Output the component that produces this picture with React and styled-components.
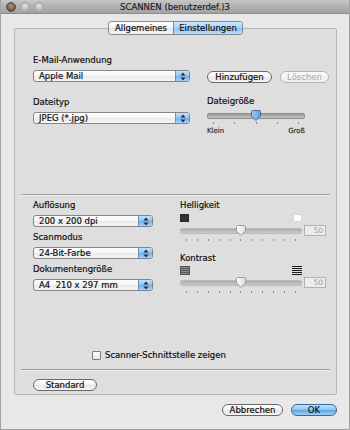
import React from 'react';
import styled, { createGlobalStyle } from 'styled-components';

const GlobalStyle = createGlobalStyle`
  html, body { margin: 0; padding: 0; background: #e8e8e8; }
  body { font-family: "DejaVu Sans", "Liberation Sans", sans-serif; font-size: 8.5px; color: #111; }
  * { box-sizing: border-box; }
`;

const Window = styled.div`
  width: 350px;
  height: 430px;
  display: flex;
  flex-direction: column;
  background: #e8e8e8;
  border: 1px solid #a2a2a2;
  border-top: none;
`;

const TitleBar = styled.div`
  height: 14px;
  flex: none;
  display: flex;
  align-items: center;
  position: relative;
  padding-left: 5px;
  gap: 4px;
  background: linear-gradient(#c6c6c6, #b2b2b2 50%, #a3a3a3);
  border-bottom: 1px solid #8c8c8c;
`;

const Light = styled.span`
  width: 10px;
  height: 10px;
  border-radius: 50%;
  background: ${p => (p.$active ? 'radial-gradient(circle at 50% 40%, #b09a84, #6c5644 70%)' : 'radial-gradient(circle at 50% 35%, #e2e2e2, #b4b4b4 75%)')};
  border: 1px solid ${p => (p.$active ? '#5a4838' : '#a0a0a0')};
`;

const Title = styled.div`
  position: absolute;
  left: 0;
  right: 0;
  text-align: center;
  font-size: 8.5px;
  color: #1a1a1a;
  -webkit-text-stroke: 0.15px #1a1a1a;
  pointer-events: none;
`;

const Body = styled.div`
  flex: 1;
  display: flex;
  flex-direction: column;
  padding: 0 12px 0 13px;
`;

const TabBox = styled.div`
  margin-top: 14px;
  height: 367px;
  display: flex;
  flex-direction: column;
  background: #dedede;
  border: 1px solid #b6b6b6;
  border-radius: 2px;
  padding: 0 6px;
`;

const Tabs = styled.div`
  align-self: center;
  margin-top: -8px;
  display: flex;
  height: 14px;
  border: 1px solid #8a8a8a;
  border-radius: 3px;
  overflow: hidden;
  background: linear-gradient(#ffffff, #f1f1f1 50%, #e4e4e4 51%, #f4f4f4);
`;

const Tab = styled.div`
  display: flex;
  align-items: center;
  justify-content: center;
  width: ${p => p.$w}px;
  font-size: 8.5px;
  color: #111;
  -webkit-text-stroke: 0.2px #111;
  border-left: ${p => (p.$first ? 'none' : '1px solid #8a8a8a')};
  background: ${p => (p.$on ? 'linear-gradient(#cfe7fb, #a8d2f6 50%, #8cc2f2 51%, #b8defb)' : 'transparent')};
`;

const Section = styled.div`
  display: grid;
  grid-template-columns: ${p => p.$cols};
  column-gap: ${p => p.$gap}px;
  padding-left: 12px;
  margin-top: ${p => p.$top}px;
`;

const Col = styled.div`
  display: flex;
  flex-direction: column;
  align-items: flex-start;
  > * { align-self: stretch; }
`;

const Label = styled.div`
  height: 11px;
  line-height: 11px;
  font-size: 8.5px;
  color: #111;
  -webkit-text-stroke: 0.2px #111;
  margin-top: ${p => p.$top || 0}px;
  margin-bottom: ${p => (p.$bottom === undefined ? 4 : p.$bottom)}px;
  white-space: nowrap;
  visibility: ${p => (p.$ghost ? 'hidden' : 'visible')};
`;

const Popup = styled.div`
  height: 12px;
  display: flex;
  border: 1px solid #858585;
  border-radius: 3px;
  overflow: hidden;
  background: linear-gradient(#ffffff, #f4f4f4 50%, #e9e9e9 51%, #f6f6f6);
`;

const PopupText = styled.div`
  flex: 1;
  padding-left: 5px;
  line-height: 10px;
  font-size: 8.5px;
  color: #111;
  -webkit-text-stroke: 0.2px #111;
  white-space: nowrap;
`;

const PopupArrow = styled.div`
  width: 14px;
  display: flex;
  align-items: center;
  justify-content: center;
  border-left: 1px solid #6f8fb3;
  background: linear-gradient(#c4e1fa, #8ec3f1 50%, #6fb0ec 51%, #a6d3f8);
`;

const ButtonRow = styled.div`
  display: flex;
  gap: 8px;
  margin-top: 1px;
  height: 12px;
`;

const Pill = styled.div`
  width: ${p => p.$w}px;
  height: 12px;
  display: flex;
  align-items: center;
  justify-content: center;
  border-radius: 7px;
  font-size: 8.5px;
  color: ${p => (p.$disabled ? '#a8a8a8' : '#111')};
  -webkit-text-stroke: ${p => (p.$disabled ? '0' : '0.2px #111')};
  border: 1px solid ${p => (p.$disabled ? '#b4b4b4' : p.$blue ? '#36679e' : '#6a6a6a')};
  background: ${p =>
    p.$blue
      ? 'linear-gradient(#c3e1fa, #8cc3f1 50%, #5ca5e6 51%, #9ed0f8)'
      : p.$disabled
      ? 'linear-gradient(#f8f8f8, #eeeeee)'
      : 'linear-gradient(#ffffff, #f3f3f3 50%, #e6e6e6 51%, #f5f5f5)'};
`;

const SliderBox = styled.div`
  width: ${p => p.$w}px;
  display: flex;
  flex-direction: column;
`;

const Track = styled.div`
  position: relative;
  height: 11px;
  display: flex;
  align-items: center;
  &::before {
    content: '';
    flex: 1;
    height: 4px;
    border-radius: 2px;
    background: linear-gradient(#9a9a9a, #c4c4c4);
    border: 1px solid ${p => (p.$dim ? '#b0b0b0' : '#8c8c8c')};
    opacity: ${p => (p.$dim ? 0.75 : 1)};
  }
`;

const Thumb = styled.svg`
  position: absolute;
  top: 0;
  left: 50%;
  margin-left: -5px;
`;

const Ticks = styled.div`
  display: flex;
  justify-content: space-between;
  padding: 0 ${p => p.$pad}px;
  margin-top: ${p => p.$top}px;
  height: 3px;
  span {
    width: 1px;
    height: 2px;
    background: #8e8e8e;
  }
`;

const SizeLabels = styled.div`
  display: flex;
  justify-content: space-between;
  font-size: 7px;
  color: #333;
  -webkit-text-stroke: 0.2px #333;
  margin-top: 2px;
  line-height: 9px;
`;

const Separator = styled.div`
  height: 2px;
  flex: none;
  border-top: 1px solid #9f9f9f;
  border-bottom: 1px solid #f0f0f0;
  margin-top: ${p => p.$top}px;
`;

const IconRow = styled.div`
  width: 122px;
  height: 8px;
  display: flex;
  justify-content: space-between;
  margin-bottom: 3px;
`;

const Swatch = styled.span`
  width: 9px;
  height: 8px;
  background: ${p => p.$c};
  border: 1px solid ${p => (p.$c === '#ffffff' ? '#d6d6d6' : '#2a2a2a')};
`;

const SliderRow = styled.div`
  display: flex;
  align-items: flex-start;
  gap: 2px;
`;

const ValueField = styled.div`
  width: 22px;
  height: 11px;
  border: 1px solid #b2b2b2;
  background: #ececec;
  color: #9a9a9a;
  font-size: 7.5px;
  line-height: 9px;
  text-align: right;
  padding-right: 2px;
`;

const CheckRow = styled.div`
  display: flex;
  align-items: center;
  height: 10px;
  gap: 4px;
  padding-left: 71px;
  margin-top: 56px;
  font-size: 8.5px;
  color: #111;
  -webkit-text-stroke: 0.2px #111;
`;

const Check = styled.span`
  width: 9px;
  height: 9px;
  border: 1px solid #7c7c7c;
  border-radius: 1px;
  background: linear-gradient(#fdfdfd, #e6e6e6);
`;

const BoxFooter = styled.div`
  padding-left: 12px;
  margin-top: 8px;
`;

const Footer = styled.div`
  display: flex;
  justify-content: flex-end;
  gap: 8px;
  margin-top: 9px;
`;

const Arrows = () => (
  <svg width="6" height="9" viewBox="0 0 6 9">
    <path d="M3 0.5 L5.5 3.5 H0.5 Z M3 8.5 L5.5 5.5 H0.5 Z" fill="#1d2f45" />
  </svg>
);

const ThumbIcon = ({ blue }) => (
  <Thumb width="10" height="11" viewBox="0 0 10 11">
    <defs>
      <linearGradient id={blue ? 'tb' : 'tw'} x1="0" y1="0" x2="1" y2="0">
        <stop offset="0" stopColor={blue ? '#9fcdf5' : '#ffffff'} />
        <stop offset="1" stopColor={blue ? '#5a9fe0' : '#dcdcdc'} />
      </linearGradient>
    </defs>
    <path
      d="M1.5 0.5 H8.5 Q9.5 0.5 9.5 1.5 V6 L5 10.5 L0.5 6 V1.5 Q0.5 0.5 1.5 0.5 Z"
      fill={`url(#${blue ? 'tb' : 'tw'})`}
      stroke={blue ? '#3f6c9c' : '#9a9a9a'}
      strokeWidth="1"
    />
  </Thumb>
);

const Slider = ({ w, blue, dim, ticks, pad, tickTop }) => (
  <SliderBox $w={w}>
    <Track $dim={dim}>
      <ThumbIcon blue={blue} />
    </Track>
    <Ticks $pad={pad} $top={tickTop}>
      {Array.from({ length: ticks }).map((_, i) => (
        <span key={i} />
      ))}
    </Ticks>
  </SliderBox>
);

const PopupButton = ({ children }) => (
  <Popup>
    <PopupText>{children}</PopupText>
    <PopupArrow>
      <Arrows />
    </PopupArrow>
  </Popup>
);

const StripeIcon = ({ dark }) => (
  <svg width="10" height="9" viewBox="0 0 10 9">
    {dark ? (
      [0.5, 2.5, 4.5, 6.5, 8.5].map(y => <line key={y} x1="0" x2="10" y1={y} y2={y} stroke="#1e1e1e" strokeWidth="1" />)
    ) : (
      <>
        <rect x="0.5" y="0.5" width="9" height="8" fill="#8a8a8a" stroke="#555" />
        {[2.5, 4.5, 6.5].map(y => (
          <line key={y} x1="1" x2="9" y1={y} y2={y} stroke="#5a5a5a" strokeWidth="1" />
        ))}
      </>
    )}
  </svg>
);

export default function App() {
  return (
    <>
      <GlobalStyle />
      <Window>
        <TitleBar>
          <Light $active />
          <Light />
          <Light />
          <Title>SCANNEN (benutzerdef.)3</Title>
        </TitleBar>
        <Body>
          <TabBox>
            <Tabs>
              <Tab $first $w={64}>Allgemeines</Tab>
              <Tab $on $w={69}>Einstellungen</Tab>
            </Tabs>

            <Section $cols="157px 1fr" $gap={17} $top={20}>
              <Col>
                <Label>E-Mail-Anwendung</Label>
                <PopupButton>Apple Mail</PopupButton>
                <Label $top={15}>Dateityp</Label>
                <PopupButton>JPEG (*.jpg)</PopupButton>
              </Col>
              <Col>
                <Label $ghost>&nbsp;</Label>
                <ButtonRow>
                  <Pill $w={65}>Hinzufügen</Pill>
                  <Pill $w={49} $disabled>Löschen</Pill>
                </ButtonRow>
                <Label $top={13} $bottom={3}>Dateigröße</Label>
                <SliderBox $w={98}>
                  <Slider w={98} blue ticks={5} pad={6} tickTop={1} />
                  <SizeLabels>
                    <span>Klein</span>
                    <span>Groß</span>
                  </SizeLabels>
                </SliderBox>
              </Col>
            </Section>

            <Separator $top={58} />

            <Section $cols="120px 1fr" $gap={27} $top={4}>
              <Col>
                <Label>Auflösung</Label>
                <PopupButton>200 x 200 dpi</PopupButton>
                <Label $top={5}>Scanmodus</Label>
                <PopupButton>24-Bit-Farbe</PopupButton>
                <Label $top={5}>Dokumentengröße</Label>
                <PopupButton>A4&nbsp; 210 x 297 mm</PopupButton>
              </Col>
              <Col>
                <Label $bottom={3}>Helligkeit</Label>
                <IconRow>
                  <Swatch $c="#333333" />
                  <Swatch $c="#ffffff" />
                </IconRow>
                <SliderRow>
                  <Slider w={122} dim ticks={11} pad={6} tickTop={3} />
                  <ValueField>50</ValueField>
                </SliderRow>
                <Label $top={11} $bottom={2}>Kontrast</Label>
                <IconRow>
                  <StripeIcon />
                  <StripeIcon dark />
                </IconRow>
                <SliderRow>
                  <Slider w={122} dim ticks={11} pad={6} tickTop={3} />
                  <ValueField>50</ValueField>
                </SliderRow>
              </Col>
            </Section>

            <CheckRow>
              <Check />
              Scanner-Schnittstelle zeigen
            </CheckRow>
            <Separator $top={9} />
            <BoxFooter>
              <Pill $w={64}>Standard</Pill>
            </BoxFooter>
          </TabBox>
          <Footer>
            <Pill $w={61}>Abbrechen</Pill>
            <Pill $w={46} $blue>OK</Pill>
          </Footer>
        </Body>
      </Window>
    </>
  );
}
